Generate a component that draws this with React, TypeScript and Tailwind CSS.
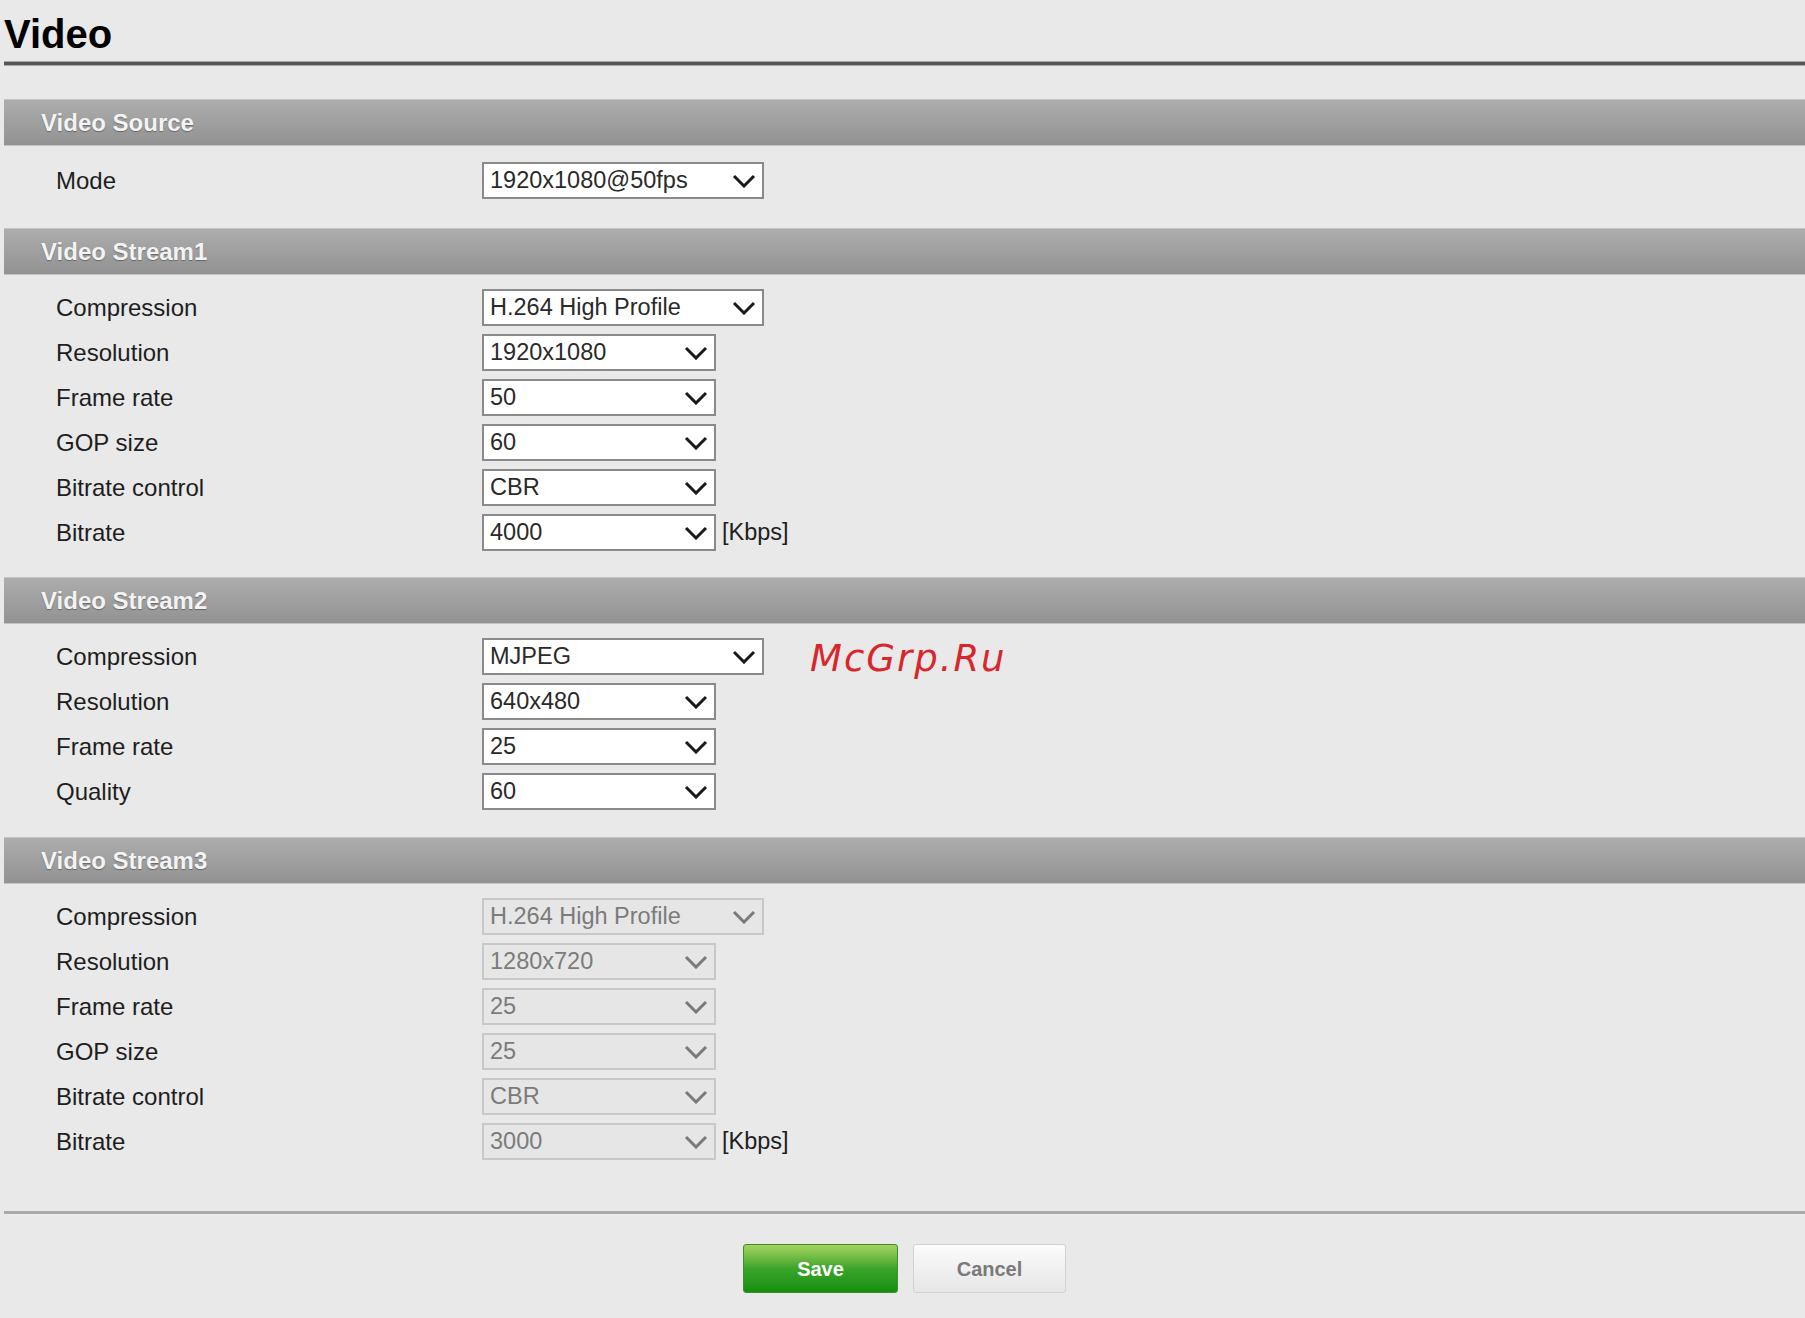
type Field = {
  label: string;
  value: string;
  wide?: boolean;
  unit?: string;
};

type Section = {
  title: string;
  disabled?: boolean;
  fields: Field[];
  pad: string;
};

const sections: Section[] = [
  {
    title: "Video Source",
    pad: "pt-[16px] pb-[29px]",
    fields: [{ label: "Mode", value: "1920x1080@50fps", wide: true }],
  },
  {
    title: "Video Stream1",
    pad: "pt-[14px] pb-[26px]",
    fields: [
      { label: "Compression", value: "H.264 High Profile", wide: true },
      { label: "Resolution", value: "1920x1080" },
      { label: "Frame rate", value: "50" },
      { label: "GOP size", value: "60" },
      { label: "Bitrate control", value: "CBR" },
      { label: "Bitrate", value: "4000", unit: "[Kbps]" },
    ],
  },
  {
    title: "Video Stream2",
    pad: "pt-[14px] pb-[27px]",
    fields: [
      { label: "Compression", value: "MJPEG", wide: true },
      { label: "Resolution", value: "640x480" },
      { label: "Frame rate", value: "25" },
      { label: "Quality", value: "60" },
    ],
  },
  {
    title: "Video Stream3",
    disabled: true,
    pad: "pt-[14px] pb-[51px]",
    fields: [
      { label: "Compression", value: "H.264 High Profile", wide: true },
      { label: "Resolution", value: "1280x720" },
      { label: "Frame rate", value: "25" },
      { label: "GOP size", value: "25" },
      { label: "Bitrate control", value: "CBR" },
      { label: "Bitrate", value: "3000", unit: "[Kbps]" },
    ],
  },
];

const Chevron = ({ disabled }: { disabled?: boolean }) => (
  <svg width="24" height="14" viewBox="0 0 24 14" className="shrink-0">
    <polyline
      points="2,2 12,12 22,2"
      fill="none"
      stroke={disabled ? "#7a7a7a" : "#1a1a1a"}
      strokeWidth="3"
    />
  </svg>
);

const FakeSelect = ({ field, disabled }: { field: Field; disabled?: boolean }) => (
  <div
    className={`flex h-[37px] items-center justify-between border-2 pl-[6px] pr-[6px] text-[23.5px] leading-none ${
      field.wide ? "w-[282px]" : "w-[234px]"
    } ${
      disabled
        ? "border-[#c8c8c8] bg-[#e6e6e6] text-[#7b7b7b]"
        : "border-[#8a8a8a] bg-white text-[#2a2a2a]"
    }`}
  >
    <span>{field.value}</span>
    <Chevron disabled={disabled} />
  </div>
);

export default function App() {
  return (
    <div className="min-h-screen bg-[#e9e9e9] pl-[4px] font-['Liberation_Sans',Arial,sans-serif] text-[#222]">
      <h1 className="pt-[14px] text-[40px] font-bold leading-[40px] text-black">Video</h1>
      <div className="mt-[7px] h-[5px] border-y border-[#a6a6a6] bg-[#555]" />

      <div className="mt-[33px]">
        {sections.map((s) => (
          <section key={s.title}>
            <div className="flex h-[47px] items-center border-y border-[#c4c4c4] bg-gradient-to-b from-[#adadad] to-[#929292] pl-[37px]">
              <span className="text-[24px] font-bold text-[#f3f3f3] [text-shadow:0_1px_1px_rgba(60,60,60,0.55)]">
                {s.title}
              </span>
            </div>
            <div className={`flex flex-col gap-[8px] ${s.pad}`}>
              {s.fields.map((f) => (
                <div key={f.label} className="flex h-[37px] items-center">
                  <div className="w-[478px] pl-[52px] text-[24px] leading-none text-[#1e1e1e]">{f.label}</div>
                  <FakeSelect field={f} disabled={s.disabled} />
                  {f.unit && <span className="ml-[6px] text-[23.5px] leading-none text-[#1e1e1e]">{f.unit}</span>}
                  {s.title === "Video Stream2" && f.label === "Compression" && (
                    <span className="ml-[46px] pt-[4px] font-['DejaVu_Sans',sans-serif] text-[37px] italic leading-none tracking-[2px] text-[#d9262c]">
                      McGrp.Ru
                    </span>
                  )}
                </div>
              ))}
            </div>
          </section>
        ))}
      </div>

      <div className="h-[3px] bg-[#a9a9a9]" />

      <div className="flex justify-center gap-[15px] pt-[30px] pb-[26px]">
        <button
          type="button"
          className="h-[49px] w-[155px] rounded-[3px] border border-[#3c8f2c] bg-gradient-to-b from-[#a3d35f] via-[#3aa52a] to-[#138f0c] text-[20px] font-bold text-white"
        >
          Save
        </button>
        <button
          type="button"
          className="h-[49px] w-[153px] rounded-[3px] border border-[#d2d2d2] bg-gradient-to-b from-[#fbfbfb] to-[#e6e6e6] text-[20px] font-bold text-[#7a7a7a]"
        >
          Cancel
        </button>
      </div>
    </div>
  );
}
